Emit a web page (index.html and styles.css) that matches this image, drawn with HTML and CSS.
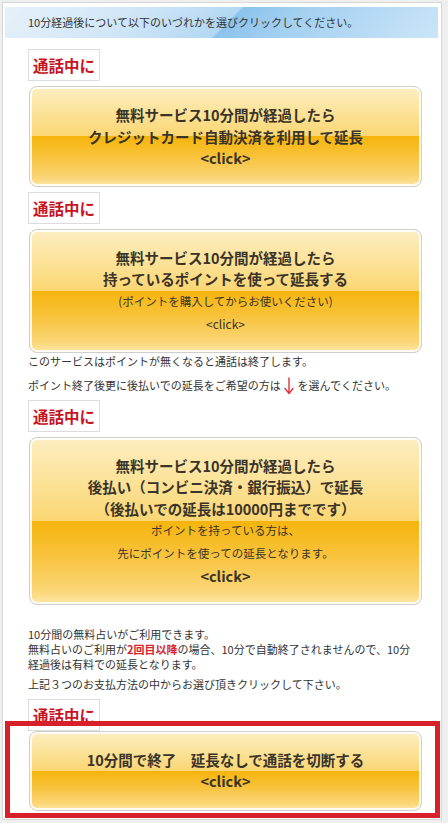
FILE: index.html
```html
<!DOCTYPE html>
<html lang="ja">
<head>
<meta charset="utf-8">
<title>延長方法の選択</title>
<link rel="stylesheet" href="styles.css">
</head>
<body>
<div class="page">
  <div class="head">10分経過後について以下のいづれかを選びクリックしてください。</div>
  <div class="content">
    <div class="label label-first">通話中に</div>
    <div class="btn">
      <div class="big">無料サービス10分間が経過したら</div>
      <div class="big">クレジットカード自動決済を利用して延長</div>
      <div class="big">&lt;click&gt;</div>
    </div>

    <div class="label">通話中に</div>
    <div class="btn">
      <div class="big">無料サービス10分間が経過したら</div>
      <div class="big">持っているポイントを使って延長する</div>
      <div class="small tall">(ポイントを購入してからお使いください)</div>
      <div class="small click-s">&lt;click&gt;</div>
    </div>
    <p class="note">このサービスはポイントが無くなると通話は終了します。</p>
    <p class="note note-arrow">ポイント終了後更に後払いでの延長をご希望の方は <svg class="arrow" width="10" height="18" viewBox="0 0 10 18"><path d="M5 1 V16.5 M1 11.5 L5 16.5 L9 11.5" fill="none" stroke="#e2323c" stroke-width="1.4" stroke-linecap="round" stroke-linejoin="round"/></svg> を選んでください。</p>

    <div class="label">通話中に</div>
    <div class="btn">
      <div class="big">無料サービス10分間が経過したら</div>
      <div class="big">後払い（コンビニ決済・銀行振込）で延長</div>
      <div class="big">（後払いでの延長は10000円までです）</div>
      <div class="small tall">ポイントを持っている方は、</div>
      <div class="small tall">先にポイントを使っての延長となります。</div>
      <div class="big">&lt;click&gt;</div>
    </div>

    <p class="info">10分間の無料占いがご利用できます。<br>無料占いのご利用が<span class="red">2回目以降</span>の場合、10分で自動終了されませんので、10分<br>経過後は有料での延長となります。</p>
    <p class="info info-last">上記３つのお支払方法の中からお選び頂きクリックして下さい。</p>

    <div class="label label-last">通話中に</div>
  </div>
  <div class="mark">
    <div class="btn btn-end">
      <div class="big">10分間で終了　延長なしで通話を切断する</div>
      <div class="big">&lt;click&gt;</div>
    </div>
  </div>
</div>
</body>
</html>
```

FILE: styles.css
```css
html, body {
  margin: 0;
  padding: 0;
}
body {
  background: #efefef;
  font-family: "Noto Sans CJK JP", "Noto Sans", sans-serif;
  color: #333;
  width: 448px;
  height: 823px;
  overflow: hidden;
}
.page {
  margin: 2px 0 0 2px;
  width: 438px;
  background: #fff;
  border: 1px solid #d6d6d6;
  padding: 4px 0 0 0;
}
.head {
  margin: 0 3px 0 2px;
  height: 31px;
  line-height: 31px;
  padding-left: 23px;
  font-size: 11px;
  color: #333;
  background: linear-gradient(135deg, #e6f1fa 0%, #cfe5f7 30%, #b3d8f3 51%, #8cc3ec 51.6%, #a2cff0 64%, #cbe5f8 100%);
}
.content {
  padding: 0 18px 0 25px;
}
.label {
  display: block;
  width: fit-content;
  border: 1px solid #dcdcdc;
  background: #fff;
  color: #c8141f;
  font-weight: bold;
  font-size: 15.5px;
  line-height: 30px;
  padding: 0 4px;
  margin-top: 5px;
}
.label-first {
  margin-top: 11px;
}
.label-last {
  margin-top: 7px;
}
.btn {
  margin: 5px 1px 0 1px;
  border: 1px solid #cfcfcf;
  border-radius: 8px;
  box-shadow: inset 0 0 0 2px rgba(255, 255, 255, 0.85);
  background: linear-gradient(180deg, #fdeec2 0%, #fce39a 25%, #fbd673 49.8%, #f6b50d 50%, #f8c23a 70%, #fad677 92%, #fde7a8 100%);
  padding: 17px 10px;
  text-align: center;
  color: #3a3328;
}
.btn-end {
  padding-bottom: 18px;
}
.big {
  font-size: 14.5px;
  font-weight: bold;
  line-height: 21.5px;
}
.small {
  font-size: 11.5px;
  line-height: 22px;
}
.small.tall {
  line-height: 23px;
}
.click-s {
  font-size: 12px;
  line-height: 22px;
}
.note {
  margin: 0;
  font-size: 11px;
  line-height: 16px;
  white-space: nowrap;
}
.note-arrow {
  margin-top: 7px;
  line-height: 19px;
}
.arrow {
  vertical-align: -5px;
  margin: 0 1px;
}
.info {
  margin: 22px 0 0 0;
  font-size: 11px;
  line-height: 15px;
  white-space: nowrap;
}
.info-last {
  margin-top: 5px;
}
.red {
  color: #d7232e;
  font-weight: bold;
}
.mark {
  position: relative;
  margin: -10px 1px 1px 2px;
  border: 5px solid #d8202a;
  padding: 5px 12px 2px 18px;
}
.mark .btn {
  margin-top: 0;
}
```
